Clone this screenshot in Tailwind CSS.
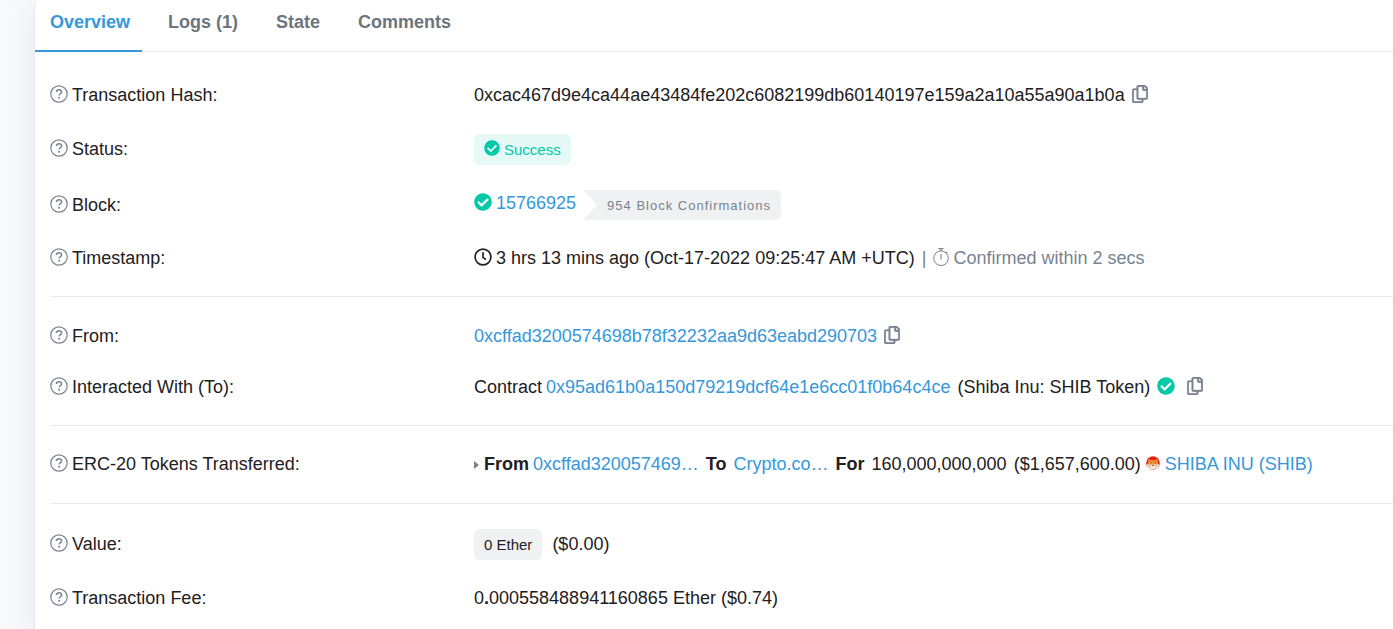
<!DOCTYPE html>
<html lang="en">
<head>
  <meta charset="UTF-8">
  <meta name="viewport" content="width=device-width, initial-scale=1.0">
  <title>Transaction Details</title>
  <script src="https://cdn.jsdelivr.net/npm/@tailwindcss/browser@4"></script>
</head>
<body class="bg-[#f8f9fb] overflow-hidden font-['Liberation_Sans',Arial,sans-serif] text-[18px] leading-[27px] text-[#1e2022]">
  <!-- Icons -->
  <svg class="hidden">
    <symbol id="help" viewBox="0 0 18 18">
      <circle cx="9" cy="9" r="8.2" fill="none" stroke="currentColor" stroke-width="1.2" />
      <path d="M6.400 7c.2-1.400 1.200-2.200 2.600-2.200 1.500 0 2.600.9 2.600 2.200 0 1.800-2.500 1.700-2.500 3.600" fill="none" stroke="currentColor" stroke-width="1.500" />
      <circle cx="9.100" cy="12.800" r="1" fill="currentColor" />
    </symbol>
    <symbol id="copy" viewBox="0 0 448 512">
      <path fill="currentColor" stroke="currentColor" stroke-width="8" d="M433.941 65.941l-51.882-51.882A48 48 0 0 0 348.118 0H176c-26.510 0-48 21.490-48 48v48H48c-26.510 0-48 21.490-48 48v320c0 26.510 21.490 48 48 48h224c26.510 0 48-21.490 48-48v-48h80c26.510 0 48-21.490 48-48V99.882a48 48 0 0 0-14.059-33.941zM266 464H54a6 6 0 0 1-6-6V150a6 6 0 0 1 6-6h74v224c0 26.510 21.490 48 48 48h96v42a6 6 0 0 1-6 6zm128-96H182a6 6 0 0 1-6-6V54a6 6 0 0 1 6-6h106v88c0 13.255 10.745 24 24 24h88v202a6 6 0 0 1-6 6zm6-256h-64V48h9.632c1.591 0 3.117.632 4.243 1.757l48.368 48.368a6 6 0 0 1 1.757 4.243V112z" />
    </symbol>
    <symbol id="check" viewBox="0 0 512 512">
      <path fill="currentColor" d="M504 256c0 136.967-111.033 248-248 248S8 392.967 8 256 119.033 8 256 8s248 111.033 248 248zM227.314 387.314l184-184c6.248-6.248 6.248-16.379 0-22.627l-22.627-22.627c-6.248-6.249-16.379-6.249-22.628 0L216 308.118l-70.059-70.059c-6.248-6.248-16.379-6.248-22.628 0l-22.627 22.627c-6.248 6.248-6.248 16.379 0 22.627l104 104c6.249 6.249 16.379 6.249 22.628.001z" />
    </symbol>
    <symbol id="clock" viewBox="0 0 18 18">
      <circle cx="9" cy="9" r="7.900" fill="none" stroke="currentColor" stroke-width="1.700" />
      <path d="M9 4.200v5.200l3 2.200" fill="none" stroke="currentColor" stroke-width="1.700" />
    </symbol>
    <symbol id="stopwatch" viewBox="0 0 16 18">
      <circle cx="8" cy="10.200" r="7.300" fill="none" stroke="currentColor" stroke-width="1" />
      <path d="M5.500.6h5M8 .6v2.300M8 6v5.500M13 5.200l1.300-1.300" fill="none" stroke="currentColor" stroke-width="1.100" />
    </symbol>
    <symbol id="shib" viewBox="0 0 14 14">
      <circle cx="7" cy="7" r="6.800" fill="#e2231a" />
      <path d="M.6 9a6.800 6.800 0 0 0 12.800 0L11 7H3z" fill="#e9e4e2" />
      <path d="M2.500 2.800l2.300 1.500h4.400l2.300-1.500.5 5-2.300 3.300H4.300L2 7.800z" fill="#f0953a" />
      <path d="M3.500 8.300l2.300.4L7 7.500l1.200 1.200 2.300-.4-1.700 3H5.200z" fill="#fbe6cf" />
      <path d="M4.200 6.300l1.500.7M9.800 6.300l-1.500.7M6.300 9h1.400l-.7.8z" fill="#4a2a18" stroke="#4a2a18" stroke-width=".6" />
    </symbol>
  </svg>

  <main class="ml-[34px] min-h-screen bg-white border-l border-[#e7eaf3] rounded-tl-md shadow-[0_8px_27px_rgba(140,152,164,0.18)]">
    <nav class="flex h-[52px] border-b border-[#e7eaf3] font-bold text-[#6c757e]">
      <a href="#overview" class="h-[52px] pl-[15px] pr-3 pt-[9px] border-b-2 border-[#3498db] text-[#3498db]">Overview</a>
      <a href="#logs" class="pt-[9px] pl-[26px]">Logs (1)</a>
      <a href="#state" class="pt-[9px] pl-[38px]">State</a>
      <a href="#comments" class="pt-[9px] pl-[38px]">Comments</a>
    </nav>

    <div class="pl-[15px] pt-1 whitespace-nowrap">
      <dl class="flex flex-col gap-[25px] pt-[26px] pb-6 border-b border-[#e7eaf3]">
        <div class="grid grid-cols-[424px_1fr] items-center">
          <dt class="flex items-center gap-1"><svg class="size-[18px] mb-[3px] text-[#77838f]"><use href="#help" /></svg>Transaction Hash:</dt>
          <dd class="flex items-center gap-[7px]">0xcac467d9e4ca44ae43484fe202c6082199db60140197e159a2a10a55a90a1b0a
            <button type="button" aria-label="Copy hash" class="mb-[3px] text-[#77838f]"><svg class="w-4 h-[18px]"><use href="#copy" /></svg></button>
          </dd>
        </div>
        <div class="grid grid-cols-[424px_1fr] items-center">
          <dt class="flex items-center gap-1"><svg class="size-[18px] mb-[3px] text-[#77838f]"><use href="#help" /></svg>Status:</dt>
          <dd class="flex">
            <span class="flex items-center gap-1 h-[31px] px-[10px] rounded-md bg-[#e5f9f6] text-[#00c9a7] text-[15px]"><svg class="size-4 mb-[3px]"><use href="#check" /></svg>Success</span>
          </dd>
        </div>
        <div class="grid grid-cols-[424px_1fr] items-center">
          <dt class="flex items-center gap-1"><svg class="size-[18px] mb-[3px] text-[#77838f]"><use href="#help" /></svg>Block:</dt>
          <dd class="flex items-center h-[30px]">
            <svg class="size-[18px] mr-1 mb-[6px] text-[#00c9a7]"><use href="#check" /></svg>
            <a href="#block" class="mb-[3px] text-[#3498db]">15766925</a>
            <span class="flex items-center h-[30px] ml-[7px] pl-6 pr-[10px] rounded-r-md bg-[#f0f1f3] text-[#77838f] text-[13px] tracking-[1px] [clip-path:polygon(0_0,100%_0,100%_100%,0_100%,14px_50%)]">954 Block Confirmations</span>
          </dd>
        </div>
        <div class="grid grid-cols-[424px_1fr] items-center">
          <dt class="flex items-center gap-1"><svg class="size-[18px] mb-[3px] text-[#77838f]"><use href="#help" /></svg>Timestamp:</dt>
          <dd class="flex items-center">
            <svg class="size-[18px] mr-1 mb-[3px]"><use href="#clock" /></svg>
            3 hrs 13 mins ago (Oct-17-2022 09:25:47 AM +UTC)
            <span class="flex items-center ml-[7px] text-[#77838f]">|<svg class="w-4 h-[18px] ml-[7px] mr-1 mb-[3px]"><use href="#stopwatch" /></svg>Confirmed within 2 secs</span>
          </dd>
        </div>
      </dl>

      <dl class="flex flex-col gap-6 pt-[26px] pb-6 border-b border-[#e7eaf3]">
        <div class="grid grid-cols-[424px_1fr] items-center">
          <dt class="flex items-center gap-1"><svg class="size-[18px] mb-[3px] text-[#77838f]"><use href="#help" /></svg>From:</dt>
          <dd class="flex items-center gap-[7px]">
            <a href="#from" class="text-[#3498db]">0xcffad3200574698b78f32232aa9d63eabd290703</a>
            <button type="button" aria-label="Copy sender address" class="mb-[3px] text-[#77838f]"><svg class="w-4 h-[18px]"><use href="#copy" /></svg></button>
          </dd>
        </div>
        <div class="grid grid-cols-[424px_1fr] items-center">
          <dt class="flex items-center gap-1"><svg class="size-[18px] mb-[3px] text-[#77838f]"><use href="#help" /></svg>Interacted With (To):</dt>
          <dd class="flex items-center">
            Contract
            <a href="#contract" class="ml-1 mr-[7px] text-[#3498db]">0x95ad61b0a150d79219dcf64e1e6cc01f0b64c4ce</a>
            (Shiba Inu: SHIB Token)
            <svg class="size-[18px] ml-[7px] mr-3 mb-[3px] text-[#00c9a7]"><use href="#check" /></svg>
            <button type="button" aria-label="Copy contract address" class="mb-[3px] text-[#77838f]"><svg class="w-4 h-[18px]"><use href="#copy" /></svg></button>
          </dd>
        </div>
      </dl>

      <dl class="pt-[25px] pb-[25px] border-b border-[#e7eaf3]">
        <div class="grid grid-cols-[424px_1fr] items-center">
          <dt class="flex items-center gap-1"><svg class="size-[18px] mb-[3px] text-[#77838f]"><use href="#help" /></svg>ERC-20 Tokens Transferred:</dt>
          <dd class="flex items-center">
            <svg viewBox="0 0 5 8" class="w-[5px] h-2 mr-[5px] text-[#77838f]"><path d="M0 0l5 4-5 4z" fill="currentColor" /></svg>
            <b>From</b>
            <a href="#from" class="ml-1 mr-[7px] text-[#3498db]">0xcffad320057469…</a>
            <b>To</b>
            <a href="#to" class="mx-[7px] text-[#3498db]">Crypto.co…</a>
            <b>For</b>
            <span class="mx-[7px]">160,000,000,000</span>
            <span>($1,657,600.00)</span>
            <svg class="size-[14px] ml-[5px] mr-[5px] mb-[3px]"><use href="#shib" /></svg>
            <a href="#token" class="text-[#3498db]">SHIBA INU (SHIB)</a>
          </dd>
        </div>
      </dl>

      <dl class="flex flex-col gap-[25px] pt-[25px]">
        <div class="grid grid-cols-[424px_1fr] items-center">
          <dt class="flex items-center gap-1"><svg class="size-[18px] mb-[3px] text-[#77838f]"><use href="#help" /></svg>Value:</dt>
          <dd class="flex items-center gap-[10px]">
            <span class="flex items-center h-[31px] px-[10px] rounded-md bg-[#f0f1f3] text-[15px]">0 Ether</span>
            <span>($0.00)</span>
          </dd>
        </div>
        <div class="grid grid-cols-[424px_1fr] items-center">
          <dt class="flex items-center gap-1"><svg class="size-[18px] mb-[3px] text-[#77838f]"><use href="#help" /></svg>Transaction Fee:</dt>
          <dd>0<b>.</b>000558488941160865 Ether ($0.74)</dd>
        </div>
      </dl>
    </div>
  </main>
</body>
</html>
